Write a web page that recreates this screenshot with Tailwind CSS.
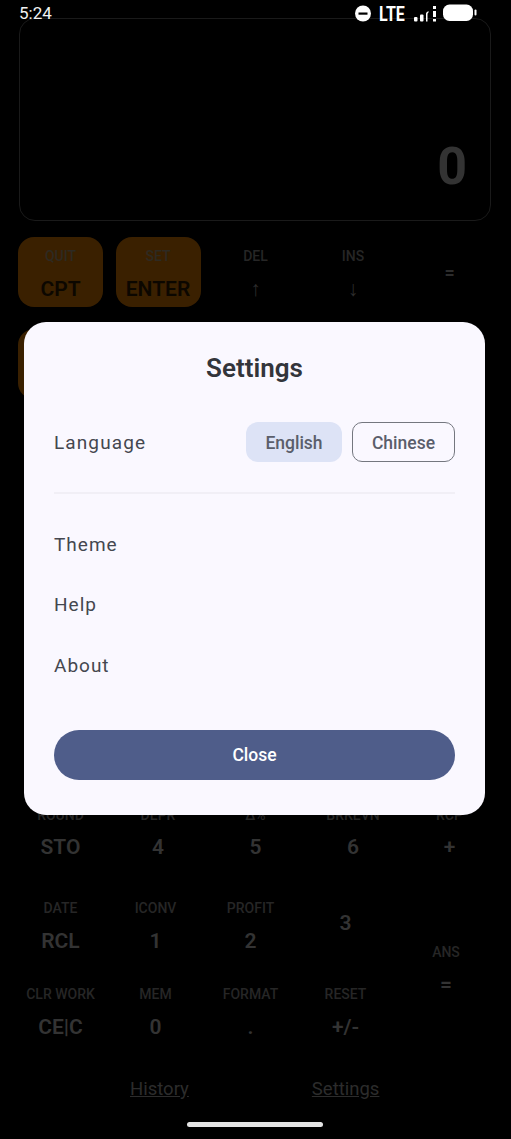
<!DOCTYPE html>
<html lang="en">
<head>
  <meta charset="UTF-8" />
  <meta name="viewport" content="width=device-width, initial-scale=1.0"/>
  <title>Calculator settings</title>
  <script src="https://cdn.jsdelivr.net/npm/@tailwindcss/browser@4"></script>
</head>
<body class="bg-black font-['Roboto',sans-serif]">
  <div class="relative h-[1139px] w-[511px] overflow-hidden bg-black">

    <!-- status bar -->
    <div class="absolute inset-x-0 top-0 z-20 h-[27px] text-white">
      <span class="absolute left-[19px] top-[3px] text-[17px] leading-[20px] text-[#f2f2f2]">5:24</span>
      <svg class="absolute left-[354px] top-[4px]" width="130" height="20" viewBox="0 0 130 20" fill="white">
        <circle cx="9" cy="9.5" r="8"/>
        <rect x="4.5" y="8.5" width="9" height="2.2" fill="black"/>
        <rect x="60" y="13" width="3.5" height="4.5" rx="1"/>
        <rect x="66" y="10.5" width="3.5" height="7" rx="1"/>
        <path d="M72 17.5v-8q0-1.5 2.500-2.500v1.500q-1 .5-1 1.500v7.500z"/>
        <rect x="79" y="2" width="3" height="3"/>
        <rect x="79" y="7" width="3" height="6"/>
        <rect x="79" y="15" width="3" height="2.500"/>
        <rect x="89" y="0.500" width="30" height="16.500" rx="6.500"/>
        <rect x="120.500" y="5.500" width="2" height="6" rx="1"/>
      </svg>
      <span class="absolute left-[379px] top-[3px] origin-left scale-x-[.8] text-[20px] font-bold leading-[22px]">LTE</span>
    </div>

    <!-- calculator behind the dialog -->
    <main class="px-[18px] pt-[18px]">
      <div class="ml-px flex h-[203px] w-[472px] items-end justify-end rounded-[16px] border border-[#1a1a1a] pb-[25px] pr-[23px]">
        <span class="text-[52px] font-bold leading-[56px] text-[#333333]">0</span>
      </div>

      <div class="mt-[16px] grid h-[70px] w-[475px] grid-cols-5 gap-x-[12.500px]">
        <div class="flex flex-col items-center rounded-[16px] bg-[#3a2000] pt-[11px]">
          <span class="text-[14px] leading-[16px] font-medium text-[#2e2a22]">QUIT</span>
          <span class="mt-[13px] text-[21px] leading-[24px] font-semibold text-[#0c0700]">CPT</span>
        </div>
        <div class="flex flex-col items-center rounded-[16px] bg-[#3a2000] pt-[11px]">
          <span class="text-[14px] leading-[16px] font-medium text-[#2e2a22]">SET</span>
          <span class="mt-[13px] text-[21px] leading-[24px] font-semibold text-[#0c0700]">ENTER</span>
        </div>
        <div class="flex flex-col items-center pt-[11px]">
          <span class="text-[14px] leading-[16px] font-medium text-[#262626]">DEL</span>
          <span class="mt-[13px] text-[21px] leading-[24px] font-semibold text-[#2c2c2c]">↑</span>
        </div>
        <div class="flex flex-col items-center pt-[11px]">
          <span class="text-[14px] leading-[16px] font-medium text-[#262626]">INS</span>
          <span class="mt-[13px] text-[21px] leading-[24px] font-semibold text-[#2c2c2c]">↓</span>
        </div>
        <div class="flex items-center justify-center pr-[2px] text-[18px] font-semibold text-[#2c2c2c]">=</div>
      </div>

      <!-- only the orange key shows past the dialog on this row -->
      <div class="mt-[22px] grid h-[70px] w-[475px] grid-cols-5 gap-x-[12.500px]">
        <div class="rounded-[16px] bg-[#3a2000]"></div>
      </div>

      <div class="mt-[397px] grid h-[70px] w-[475px] grid-cols-5 gap-x-[12.500px]">
        <div class="flex flex-col items-center pt-[11px]">
          <span class="text-[14px] leading-[16px] font-medium text-[#262626]">ROUND</span>
          <span class="mt-[12px] text-[21px] leading-[24px] font-semibold text-[#333333]">STO</span>
        </div>
        <div class="flex flex-col items-center pt-[11px]">
          <span class="text-[14px] leading-[16px] font-medium text-[#262626]">DEPR</span>
          <span class="mt-[12px] text-[21px] leading-[24px] font-semibold text-[#333333]">4</span>
        </div>
        <div class="flex flex-col items-center pt-[11px]">
          <span class="text-[14px] leading-[16px] font-medium text-[#262626]">Δ%</span>
          <span class="mt-[12px] text-[21px] leading-[24px] font-semibold text-[#333333]">5</span>
        </div>
        <div class="flex flex-col items-center pt-[11px]">
          <span class="text-[14px] leading-[16px] font-medium text-[#262626]">BRKEVN</span>
          <span class="mt-[12px] text-[21px] leading-[24px] font-semibold text-[#333333]">6</span>
        </div>
        <div class="flex flex-col items-center pr-[2px] pt-[11px]">
          <span class="text-[14px] leading-[16px] font-medium text-[#262626]">RCP</span>
          <span class="mt-[12px] text-[21px] leading-[24px] font-semibold text-[#333333]">+</span>
        </div>
      </div>

      <div class="-ml-[5px] mt-[23px] flex w-[476px]">
        <div class="grid w-[380px] shrink-0 grid-cols-4 gap-y-[16px]">
          <div class="flex h-[70px] flex-col items-center pt-[11px]">
            <span class="text-[14px] leading-[16px] font-medium text-[#262626]">DATE</span>
            <span class="mt-[13px] text-[21px] leading-[24px] font-semibold text-[#333333]">RCL</span>
          </div>
          <div class="flex h-[70px] flex-col items-center pt-[11px]">
            <span class="text-[14px] leading-[16px] font-medium text-[#262626]">ICONV</span>
            <span class="mt-[13px] text-[21px] leading-[24px] font-semibold text-[#333333]">1</span>
          </div>
          <div class="flex h-[70px] flex-col items-center pt-[11px]">
            <span class="text-[14px] leading-[16px] font-medium text-[#262626]">PROFIT</span>
            <span class="mt-[13px] text-[21px] leading-[24px] font-semibold text-[#333333]">2</span>
          </div>
          <div class="flex h-[70px] items-center justify-center text-[21px] font-semibold text-[#333333]">3</div>
          <div class="flex h-[70px] flex-col items-center pt-[11px]">
            <span class="text-[14px] leading-[16px] font-medium text-[#262626]">CLR WORK</span>
            <span class="mt-[13px] text-[21px] leading-[24px] font-semibold text-[#333333]">CE|C</span>
          </div>
          <div class="flex h-[70px] flex-col items-center pt-[11px]">
            <span class="text-[14px] leading-[16px] font-medium text-[#262626]">MEM</span>
            <span class="mt-[13px] text-[21px] leading-[24px] font-semibold text-[#333333]">0</span>
          </div>
          <div class="flex h-[70px] flex-col items-center pt-[11px]">
            <span class="text-[14px] leading-[16px] font-medium text-[#262626]">FORMAT</span>
            <span class="mt-[13px] text-[21px] leading-[24px] font-semibold text-[#333333]">.</span>
          </div>
          <div class="flex h-[70px] flex-col items-center pt-[11px]">
            <span class="text-[14px] leading-[16px] font-medium text-[#262626]">RESET</span>
            <span class="mt-[13px] text-[21px] leading-[24px] font-semibold text-[#333333]">+/-</span>
          </div>
        </div>
        <div class="flex w-[96px] shrink-0 flex-col items-center pl-[10px] pt-[55px]">
          <span class="text-[14px] leading-[16px] font-medium text-[#262626]">ANS</span>
          <span class="mt-[12px] text-[21px] leading-[24px] font-semibold text-[#333333]">=</span>
        </div>
      </div>

      <div class="mt-[33px] flex w-[473px]">
        <span class="ml-[112px] text-[18.500px] leading-[22px] text-[#2c2c2c] underline">History</span>
        <span class="ml-[123px] text-[18.500px] leading-[22px] text-[#2c2c2c] underline">Settings</span>
      </div>
    </main>

    <!-- home indicator -->
    <div class="absolute bottom-[12px] left-[187px] z-20 h-[5px] w-[136px] rounded-full bg-[#e4e4e4]"></div>

    <!-- settings dialog -->
    <section class="absolute left-[24px] top-[322px] z-10 flex h-[493px] w-[461px] flex-col rounded-[22px] bg-[#faf8ff] px-[30px] pt-[31px]">
      <h2 class="text-center text-[26px] font-semibold leading-[30px] text-[#33353b]">Settings</h2>
      <div class="mt-[39px] flex h-[40px] items-center justify-between">
        <span class="pt-[3px] text-[19px] tracking-[1.100px] text-[#44474f]">Language</span>
        <div class="flex gap-[10px]">
          <button class="h-[40px] w-[96px] rounded-[12px] bg-[#dde3f6] pt-[3px] text-[17.500px] font-medium text-[#5a5e6b]">English</button>
          <button class="h-[40px] w-[103px] rounded-[10px] border border-[#74777f] pt-[3px] text-[17.500px] font-medium text-[#5a5e6b]">Chinese</button>
        </div>
      </div>
      <div class="mt-[30px] h-[2px] w-full bg-[#f1eff6]"></div>
      <ul class="mt-[20.700px] flex flex-col text-[19px] tracking-[1px] text-[#44474f]">
        <li class="flex h-[60.500px] items-center">Theme</li>
        <li class="flex h-[60.500px] items-center">Help</li>
        <li class="flex h-[60.500px] items-center">About</li>
      </ul>
      <button class="mt-[34.300px] h-[50px] w-full rounded-full bg-[#4f5d8a] text-[17.500px] font-medium text-white">Close</button>
    </section>
  </div>
</body>
</html>
